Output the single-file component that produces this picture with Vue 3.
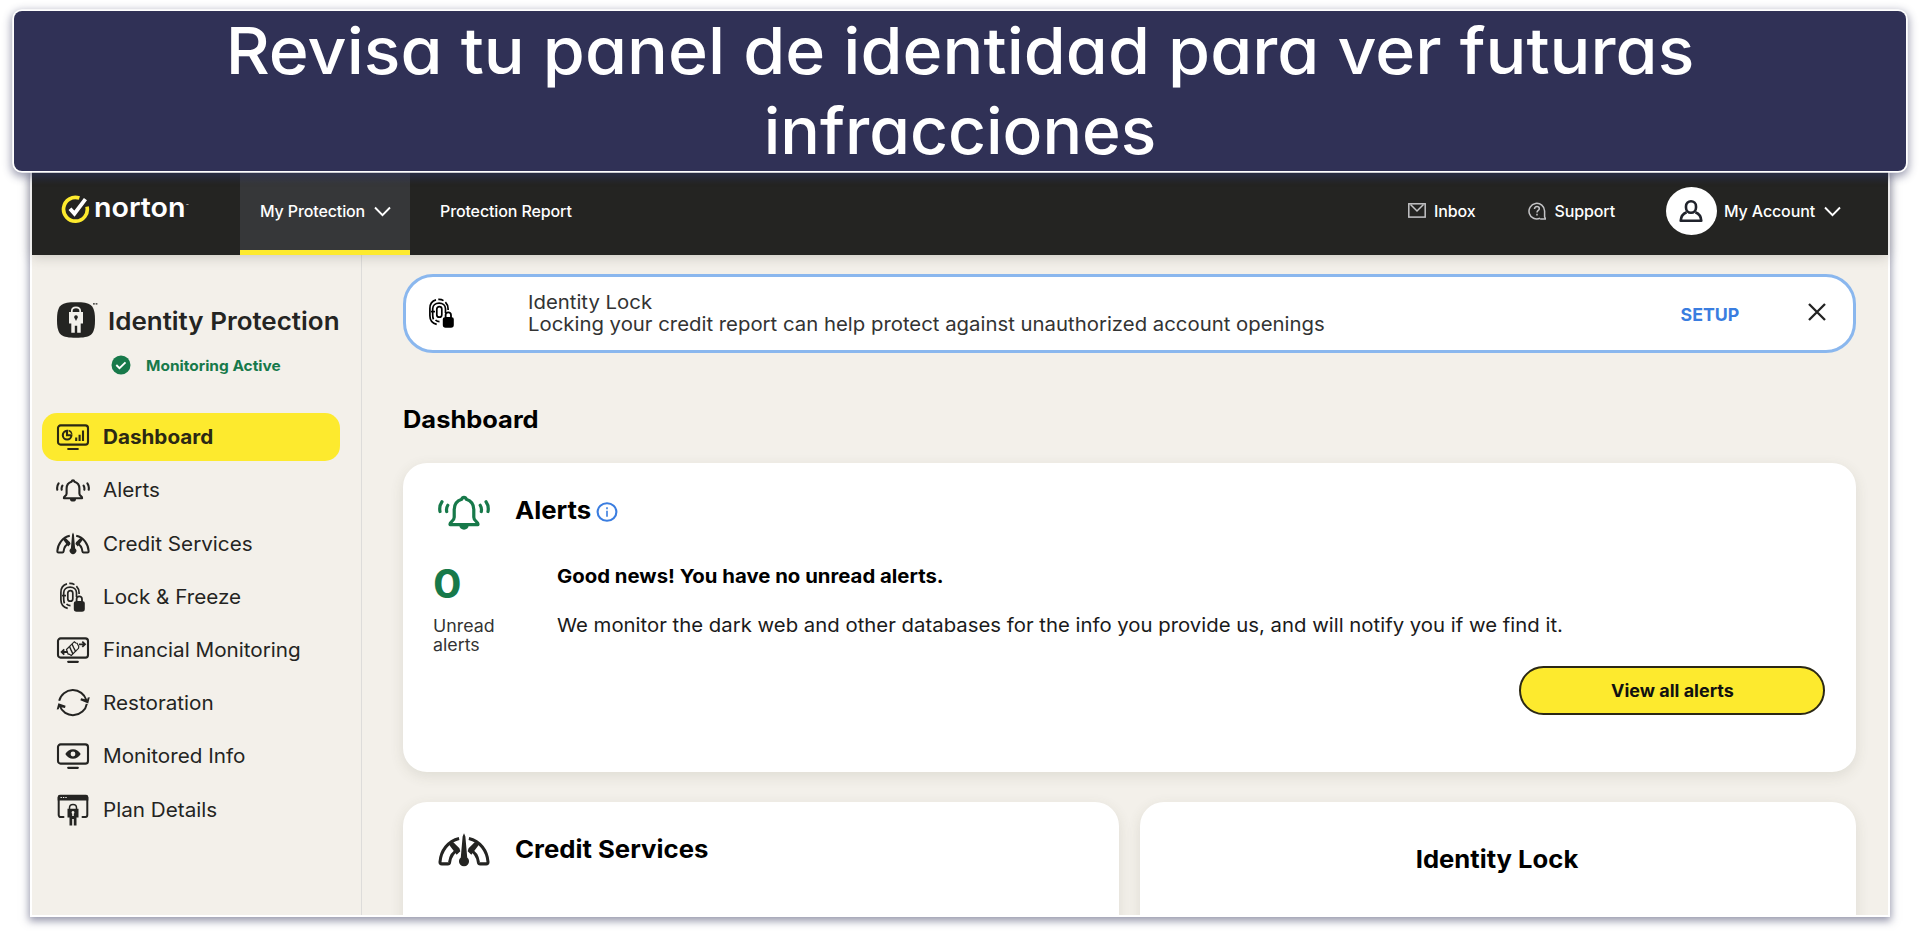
<script setup>
const navItems = [
  { id: 'dashboard', label: 'Dashboard', active: true },
  { id: 'bell', label: 'Alerts' },
  { id: 'gauge', label: 'Credit Services' },
  { id: 'lock', label: 'Lock & Freeze' },
  { id: 'finance', label: 'Financial Monitoring' },
  { id: 'restore', label: 'Restoration' },
  { id: 'eye', label: 'Monitored Info' },
  { id: 'plan', label: 'Plan Details' },
]
</script>

<template>
  <div class="page">
    <!-- shared icon shapes -->
    <svg class="sprite" width="0" height="0">
      <symbol id="i-dashboard" viewBox="0 0 34 30">
        <g fill="none" stroke="currentColor" stroke-width="2.1">
          <rect x="2" y="3.4" width="30" height="19.2" rx="2.6" />
          <path d="M12.2 27h9.6" stroke-linecap="round" stroke-width="2.2" />
          <path d="M11 8.9a4.3 4.3 0 1 0 4.4 4.3H11z" />
          <path d="M12.6 8.6a4.3 4.3 0 0 1 3.2 3.2" stroke-width="1.5" />
          <path d="M20.2 19v-3.4M23.6 19v-6.2M27 19V8.4" />
        </g>
      </symbol>
      <symbol id="i-bell" viewBox="0 0 34 30">
        <g fill="none" stroke="currentColor" stroke-width="2.1" stroke-linecap="round" stroke-linejoin="round">
          <path d="M17 5.4c-.9 0-1.3.6-1.5 1.3-3.1 1-4.9 3.5-4.9 6.7v5.1c0 1.3-.6 2-1.6 2.7-.8.6-1.3 1.3-1.1 2.1h18.2c.2-.8-.3-1.5-1.1-2.1-1-.7-1.6-1.4-1.6-2.7v-5.1c0-3.2-1.8-5.7-4.9-6.7-.2-.7-.6-1.3-1.5-1.3z" />
          <path d="M2.6 8.3C1.1 10.4.9 12.6 1.3 14.7M6.4 10.6c-.8 1.3-1 2.7-.7 4.1M31.4 8.3c1.5 2.1 1.7 4.3 1.3 6.4M27.6 10.6c.8 1.3 1 2.7.7 4.1" />
        </g>
        <path d="M14 24h6a3 2.6 0 0 1-6 0z" fill="currentColor" />
      </symbol>
      <symbol id="i-gauge" viewBox="0 0 34 30">
        <g fill="none" stroke="currentColor" stroke-width="2" stroke-linejoin="round">
          <path d="M13.8 6.8C6.5 8.4 1.8 15 1.3 22.2c0 .8.4 1.2 1.2 1.2h3.9c.8 0 1.1-.4 1.2-1.1.4-3.5 2.4-6.8 6-8.6" />
          <path d="M20.2 6.8c7.3 1.6 12 8.2 12.5 15.4 0 .8-.4 1.2-1.2 1.2h-3.9c-.8 0-1.1-.4-1.2-1.1-.4-3.5-2.4-6.8-6-8.6" />
        </g>
        <path d="M7 10.6l5.2 6.8 2.4-2.3-.6-1.9-4.3-4.3zM27 10.6l-5.2 6.8-2.4-2.3.6-1.9 4.3-4.3z" fill="currentColor" />
        <path d="M17 3.4l.9 2.2 1.2 13.6a3.3 3.3 0 1 1-4.2 0l1.2-13.6z" fill="currentColor" />
      </symbol>
      <symbol id="i-lock" viewBox="0 0 34 30">
        <g fill="none" stroke="currentColor" stroke-width="1.7">
          <rect x="11.8" y="8.6" width="5" height="10.6" rx="2.5" />
          <path d="M8.5 21.3c-.7-1.4-.8-2.8-.8-4.3v-6.2c0-3.5 2.9-5.7 6.4-5.7s6.400 2.200 6.400 5.700V15M10.500 22c1 1 2.200 1.700 4 1.700" />
          <path d="M11 1.9C7 2.9 4.900 6.400 4.900 10.500v7.200c0 3.900 2.400 7.500 6.800 8.700M13.300 1.400c2-.1 3.800.3 5.200 1.200M20.400 4.200c1.700 1.700 2.700 4 2.700 6.900v1" />
          <path d="M6 13.6h4" />
        </g>
        <path d="M19.700 19.300v-2c0-2.400 1.400-3.700 3.600-3.700s3.600 1.300 3.600 3.700v2a2 2 0 0 1 1.900 2v5.700a2.800 2.800 0 0 1-2.800 2.800h-5.400a2.800 2.800 0 0 1-2.800-2.800v-5.700a2 2 0 0 1 1.900-2zm1.800-.4h3.600v-1.400c0-1.400-.6-2.200-1.800-2.200s-1.800.8-1.800 2.200z" fill-rule="evenodd" fill="currentColor" />
      </symbol>
      <symbol id="i-finance" viewBox="0 0 34 30">
        <g fill="none" stroke="currentColor" stroke-width="2.1">
          <rect x="2" y="3.4" width="30" height="19.2" rx="2.6" />
          <path d="M12.2 26.8h9.6" stroke-linecap="round" stroke-width="2.2" />
          <g stroke-width="1.2">
            <path d="M10.5 14.5l7.8-7.8 1.5 1.3 1.3.2 1.7 3.3-.3 1.8-7.200 7.200-1.900-1.200-1.400-.4z" />
            <path d="M13.5 11.5l1.6 3.6 1.9 4M16 9l1.700 3.800 2 3.800" stroke-width="1.4" />
            <path d="M23 9.300h5.500M26.300 6.700l2.700 2.600-2.700 2.600M11.500 17H6M8.300 14.400L5.600 17l2.700 2.600" stroke-width="1.8" />
          </g>
        </g>
      </symbol>
      <symbol id="i-restore" viewBox="0 0 34 30">
        <g fill="none" stroke="currentColor" stroke-width="2">
          <path d="M3.2 12.800A14 13.600 0 0 1 30.400 12.200M30.800 15.800A14 13.600 0 0 1 3.700 17.800" />
        </g>
        <path d="M24.400 12.200l7.800 3.200 1.600-6.200-2 .2-.7 2.300-6-1.400zM9.600 17.800L2.400 15.300.7 21.600l2-.3.7-2.300 5.600 1z" fill="currentColor" />
      </symbol>
      <symbol id="i-eye" viewBox="0 0 34 30">
        <g fill="none" stroke="currentColor" stroke-width="2.1">
          <rect x="2" y="3.4" width="30" height="19.2" rx="2.6" />
          <path d="M12.2 26.8h9.6" stroke-linecap="round" stroke-width="2.2" />
        </g>
        <path fill-rule="evenodd" d="M9.3 13c1.8-3.2 4.6-4.8 7.7-4.8s5.9 1.6 7.7 4.8c-1.8 3.2-4.6 4.8-7.7 4.8S11.1 16.200 9.300 13zM17 10.600a2.400 2.400 0 1 0 0 4.800 2.400 2.400 0 0 0 0-4.800z" fill="currentColor" />
      </symbol>
      <symbol id="i-plan" viewBox="0 0 34 32">
        <path d="M7.5 23H4.6A1.9 1.9 0 0 1 2.7 21.1V3.5M26.5 23h2.9a1.9 1.9 0 0 0 1.9-1.9V3.5" fill="none" stroke="currentColor" stroke-width="2" stroke-linecap="round" />
        <path d="M1.7 6.6V3a2.300 2.300 0 0 1 2.300-2.300h26A2.300 2.300 0 0 1 32.300 3v3.600z" fill="currentColor" />
        <path d="M4.500 3.500h6.500" stroke="#f2f0eb" stroke-width="1.2" stroke-dasharray="1.4 1" />
        <path d="M13.500 15v-1.300c0-1.900 1.500-3.200 3.500-3.200s3.500 1.300 3.500 3.200V15" fill="none" stroke="currentColor" stroke-width="1.5" />
        <path fill-rule="evenodd" d="M11.500 14.700h11v8.800h-2v8h-2.700v-6.400h-1.600v6.400h-2.700v-8h-2zM17 17a1.500 1.500 0 0 0-.8 2.700v2.300h1.600v-2.300A1.500 1.500 0 0 0 17 17z" fill="currentColor" />
      </symbol>
    </svg>

    <h1 class="caption">
      <span class="caption-one">Revisa tu panel de identidad para ver futuras</span>
      <span class="caption-two">infracciones</span>
    </h1>

    <div class="app">
      <header class="topbar">
        <div class="brand">
          <svg class="brand-mark" viewBox="0 0 30 30">
            <path d="M19 3.2A12.3 12.3 0 1 0 26.9 12" fill="none" stroke="#fdea2e" stroke-width="3.8" />
            <path d="M9.3 14.2l4.6 5.1L25.3 4.2" fill="none" stroke="#fff" stroke-width="4" />
          </svg>
          <span class="brand-name">norton</span><span class="brand-tm">™</span>
        </div>
        <a class="tab tab-active">
          <span>My Protection</span>
          <svg class="chev" viewBox="0 0 17 11"><path d="M1 1.5l7.500 7.700L16 1.500" /></svg>
        </a>
        <a class="tab tab-report">Protection Report</a>
        <div class="right">
          <a class="link inbox">
            <svg viewBox="0 0 18 15" width="18" height="15" fill="none" stroke="#c4c4c6" stroke-width="1.5">
              <rect x=".8" y=".8" width="16.4" height="13.3" /><path d="M2.5 1.5L9 8l6.500-6.500" />
            </svg>
            <span>Inbox</span>
          </a>
          <a class="link support">
            <svg viewBox="0 0 18 18" width="18" height="18" fill="none" stroke="#c4c4c6" stroke-width="1.5">
              <path d="M12 16.300A7.800 7.800 0 1 1 16.600 9v5.800l1 2.200h-5.400" />
              <path d="M6.500 6.900c0-1.500 1-2.300 2.400-2.300s2.400.8 2.400 2.100c0 1.800-2.300 1.700-2.300 3.800M9 11.800v1.600" />
            </svg>
            <span>Support</span>
          </a>
          <a class="link account">
            <span class="avatar">
              <svg viewBox="0 0 24 24" width="24" height="24" fill="none" stroke="#20232c" stroke-width="2.6" stroke-linejoin="round">
                <rect x="7" y="2.2" width="10" height="11.5" rx="5" />
                <path d="M7.600 13.200C4.200 14.500 1.900 17.600 1.700 21.800h20.600c-.2-4.200-2.500-7.300-5.900-8.600" />
              </svg>
            </span>
            <span>My Account</span>
            <svg class="chev" viewBox="0 0 17 11"><path d="M1 1.500l7.500 7.700L16 1.500" /></svg>
          </a>
        </div>
      </header>

      <div class="body">
        <aside class="side">
          <div class="product">
            <svg class="product-logo" viewBox="0 0 41 36">
              <path d="M19 .3C33.500.3 38 2.500 38 18S33.500 35.700 19 35.700 0 33.500 0 18 4.500.3 19 .3z" fill="#242422" />
              <path d="M14.800 10.500V9c0-2.300 1.700-3.700 4.200-3.700s4.200 1.400 4.200 3.700v1.500" fill="none" stroke="#f2f0eb" stroke-width="1.7" />
              <path fill-rule="evenodd" d="M12 10h14v11.500h-2.300v9.300h-3.500v-7h-2.400v7h-3.500v-9.300H12zM19 13.300a1.900 1.900 0 0 0-1.100 3.400L19 19l1.100-2.300a1.900 1.900 0 0 0-1.100-3.400z" fill="#f2f0eb" />
              <path d="M36 1.800h1.800M38.600 1.800h1.800" stroke="#242422" stroke-width="1.3" />
            </svg>
            <h2 class="wide">Identity Protection</h2>
          </div>
          <div class="status">
            <svg viewBox="0 0 20 20" width="20" height="20">
              <circle cx="10" cy="10" r="9.5" fill="#17794a" />
              <path d="M5.300 10l3.200 3.100 6-5.700" fill="none" stroke="#fff" stroke-width="1.9" />
            </svg>
            <span class="wide">Monitoring Active</span>
          </div>
          <nav>
            <a v-for="item in navItems" :key="item.id" class="nav-item" :class="[item.id, { active: item.active }]">
              <svg class="nav-icon"><use :href="'#i-' + item.id" /></svg>
              <span class="wide">{{ item.label }}</span>
            </a>
          </nav>
        </aside>

        <main class="main">
          <section class="notice">
            <svg class="notice-icon"><use href="#i-lock" /></svg>
            <p class="wide">
              <span>Identity Lock</span>
              <span>Locking your credit report can help protect against unauthorized account openings</span>
            </p>
            <a class="setup">SETUP</a>
            <svg class="close" viewBox="0 0 18 18"><path d="M1 1l16 16M17 1L1 17" /></svg>
          </section>

          <h2 class="title wide">Dashboard</h2>

          <section class="card alerts">
            <div class="card-head">
              <svg class="card-icon green"><use href="#i-bell" /></svg>
              <h3 class="wide">Alerts</h3>
              <svg class="info" viewBox="0 0 22 20" width="22" height="20" fill="none" stroke="#3a7de0" stroke-width="2.1">
                <ellipse cx="11" cy="10" rx="9.4" ry="8.8" /><path d="M11 8.800v6M11 5.300v2" stroke-width="1.6" />
              </svg>
            </div>
            <div class="card-body">
              <div class="count wide">
                <strong>0</strong>
                <span>Unread<br />alerts</span>
              </div>
              <div class="news wide">
                <p class="good">Good news! You have no unread alerts.</p>
                <p class="detail">We monitor the dark web and other databases for the info you provide us, and will notify you if we find it.</p>
              </div>
            </div>
            <button class="view"><span>View all alerts</span></button>
          </section>

          <div class="row">
            <section class="card small">
              <div class="card-head">
                <svg class="card-icon"><use href="#i-gauge" /></svg>
                <h3 class="h-credit wide">Credit Services</h3>
              </div>
            </section>
            <section class="card small centered">
              <h3 class="h-lock">Identity Lock</h3>
            </section>
          </div>
        </main>
      </div>
    </div>
  </div>
</template>

<style>
html,
body {
  margin: 0;
  background: #fff;
}
</style>

<style scoped>
.page {
  width: 1919px;
  height: 931px;
  overflow: hidden;
  box-sizing: border-box;
  padding-top: 10.5px;
  background: #fff;
  font-family: Inter, 'Liberation Sans', sans-serif;
  font-optical-sizing: none;
  color: #242422;
}
.page * {
  box-sizing: border-box;
}
h1, h2, h3, p {
  margin: 0;
}
.sprite {
  position: absolute;
}
/* extended letterforms */
.wide {
  transform: scaleX(1.06);
  transform-origin: left center;
}
.caption {
  position: relative;
  z-index: 3;
  height: 160px;
  margin: 0 13px 0 14px;
  border-radius: 8px;
  background: #303156;
  box-shadow: 0 0 0 1.8px #fff, 0 3px 9px 3px rgba(48, 50, 90, 0.45);
  color: #fff;
  font-weight: 450;
  font-size: 64.5px;
  line-height: 80px;
  font-feature-settings: 'cv11', 'ss03';
  text-align: center;
  white-space: nowrap;
}
.caption span {
  display: block;
}
.caption-one {
  transform: scaleX(1.055);
}
.caption-two {
  transform: scaleX(1.022);
}
.app {
  position: relative;
  width: 1856px;
  height: 742.5px;
  margin: 1.5px 0 0 32px;
  background: #f3f0ea;
  box-shadow: 0 0 0 2px #fff, 0 3px 8px 3px rgba(48, 50, 90, 0.5);
}
.topbar {
  position: relative;
  z-index: 2;
  display: flex;
  height: 82.5px;
  background: linear-gradient(#242a36, #242422 12px);
  box-shadow: 0 2px 12px rgba(60, 55, 45, 0.22);
  color: #fff;
  font-weight: 550;
  font-size: 16px;
  letter-spacing: -0.12px;
  line-height: 24px;
}
.brand {
  display: flex;
  width: 208px;
  padding-left: 28px;
}
.brand-mark {
  width: 31px;
  height: 29px;
  margin-top: 22.5px;
}
.brand-name {
  margin: 20px 0 0 3px;
  font-weight: 600;
  font-size: 27.5px;
  letter-spacing: 0;
  line-height: 30px;
  transform: scaleX(1.04);
  transform-origin: left center;
}
.brand-tm {
  margin: 22px 0 0 4px;
  font-size: 4px;
}
.tab {
  display: flex;
  padding-top: 27px;
}
.tab-active {
  width: 170px;
  padding-left: 20px;
  border-bottom: 5px solid #fdea2e;
  background: linear-gradient(#353a48, #363739 12px);
}
.chev {
  width: 17px;
  height: 11px;
  margin: 7px 0 0 9px;
  fill: none;
  stroke: #fff;
  stroke-width: 1.9;
}
.tab-report {
  padding-left: 30px;
}
.right {
  display: flex;
  margin-left: auto;
  padding-right: 47px;
}
.link {
  display: flex;
  padding-top: 27px;
}
.inbox svg {
  margin: 4px 8px 0 0;
}
.support {
  margin-left: 53px;
}
.support svg {
  margin: 2.5px 8px 0 0;
}
.account {
  margin-left: 51px;
}
.avatar {
  display: flex;
  align-items: center;
  justify-content: center;
  width: 51px;
  height: 48px;
  margin: -12px 7px 0 0;
  border-radius: 50%;
  background: #fff;
}
.body {
  display: flex;
  height: 660px;
  overflow: hidden;
}
.side {
  width: 330px;
  border-right: 1px solid #dddcda;
  padding: 47.5px 0 0 10px;
}
.product {
  display: flex;
  padding-left: 15px;
}
.product-logo {
  width: 41px;
  height: 36px;
}
.product h2 {
  margin: 4px 0 0 10px;
  font-weight: 620;
  font-size: 24.5px;
  line-height: 30px;
  white-space: nowrap;
}
.status {
  display: flex;
  align-items: center;
  height: 20px;
  margin: 17px 0 0 68.5px;
  color: #17794a;
  font-weight: 700;
  font-size: 14.6px;
}
.status span {
  margin: 1px 0 0 15.5px;
}
nav {
  margin-top: 38.3px;
}
.nav-item {
  display: flex;
  align-items: center;
  width: 298px;
  height: 48px;
  margin-bottom: 5.2px;
  padding-left: 14px;
  border-radius: 15px;
  font-size: 19.5px;
  line-height: 24px;
}
.nav-item.active {
  background: #fdea2e;
  color: #2b2814;
  font-weight: 700;
}
.nav-icon {
  width: 34px;
  height: 30px;
  margin-right: 13px;
}
.plan .nav-icon {
  height: 32px;
}
.main {
  width: 1453px;
  margin-left: 41px;
  padding-top: 19.5px;
}
.notice {
  display: flex;
  height: 79px;
  border: 3px solid #8ab7ee;
  border-radius: 30px;
  background: #fff;
  font-size: 19.2px;
  line-height: 22px;
  white-space: nowrap;
}
.notice-icon {
  width: 34px;
  height: 30px;
  margin: 21px 0 0 19px;
  color: #000;
}
.notice p {
  width: 1153px;
  margin: 14px 0 0 68.5px;
  color: #333;
}
.notice p span {
  display: block;
}
.setup {
  width: 127px;
  margin-top: 26.5px;
  color: #3a7de0;
  font-weight: 700;
  font-size: 17.8px;
}
.close {
  width: 18px;
  height: 18px;
  margin-top: 25.5px;
  fill: none;
  stroke: #222;
  stroke-width: 2.3;
}
.title {
  width: 400px;
  margin-top: 52px;
  color: #000;
  font-weight: 700;
  font-size: 24px;
  line-height: 30px;
}
.card {
  border-radius: 24px;
  background: #fff;
  box-shadow: 0 4px 14px rgba(70, 70, 50, 0.12);
  color: #000;
}
.alerts {
  display: flex;
  flex-direction: column;
  height: 309px;
  margin-top: 28px;
  padding: 25px 31px 0 30px;
}
.card-head {
  display: flex;
}
.card-icon {
  width: 52px;
  height: 46px;
  margin: 1px 25px 0 5px;
  color: #242422;
}
.green {
  color: #17794a;
}
.card h3 {
  font-weight: 720;
  font-size: 24.3px;
  line-height: 30px;
  white-space: nowrap;
}
.alerts h3 {
  margin-top: 7px;
}
.info {
  margin: 14px 0 0 9px;
}
.card-body {
  display: flex;
  margin-top: 29px;
}
.count {
  width: 124px;
}
.count strong {
  display: block;
  height: 40px;
  color: #17794a;
  font-weight: 750;
  font-size: 40px;
  line-height: 40px;
}
.count span {
  display: block;
  margin-top: 12.5px;
  color: #333;
  font-size: 16.8px;
  line-height: 19.5px;
}
.news {
  font-size: 19.2px;
  line-height: 24px;
  white-space: nowrap;
}
.good {
  font-weight: 650;
}
.detail {
  margin-top: 24.5px;
  color: #1a1a1a;
}
.view {
  width: 306px;
  height: 49px;
  margin: 10.5px 0 0 auto;
  border: 2px solid #2b2814;
  border-radius: 25px;
  background: #fdea2e;
  color: #111;
  font-family: inherit;
  font-weight: 650;
  font-size: 17.1px;
}
.view span {
  display: inline-block;
  transform: scaleX(1.05);
}
.row {
  display: flex;
  gap: 21px;
  margin-top: 30px;
}
.small {
  flex: 1;
  height: 160px;
  padding: 25px 30px 0;
}
.h-credit {
  margin-top: 7px;
}
.centered {
  padding-top: 41.5px;
  text-align: center;
}
.h-lock {
  transform: translateX(-1px) scaleX(1.055);
}
</style>
